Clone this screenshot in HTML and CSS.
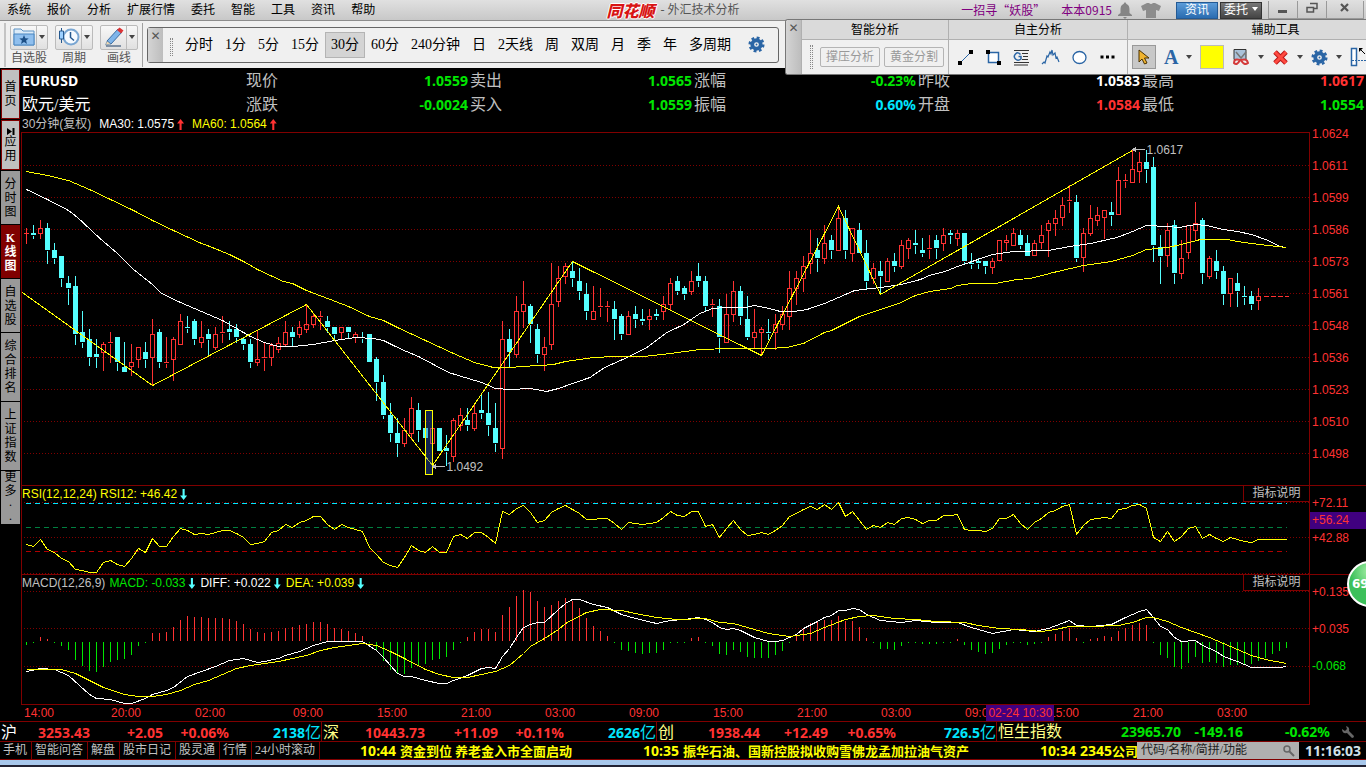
FILE: index.html
```
<!DOCTYPE html>
<html lang="zh-CN">
<head>
    <meta charset="UTF-8">
    <title>同花顺 - 外汇技术分析</title>
    <link rel="stylesheet" href="styles.css">
</head>
<body>
    <svg class="defs" width="0" height="0">
        <symbol id="gear" viewBox="0 0 18 18">
            <circle cx="9" cy="9" r="4.500" fill="none" stroke="#2a65a5" stroke-width="4"/>
            <circle cx="9" cy="9" r="7.200" fill="none" stroke="#2a65a5" stroke-width="2.600" stroke-dasharray="3 2.650"/>
            <circle cx="9" cy="9" r="1" fill="#2a65a5"/>
        </symbol>
    </svg>

    <header class="titlebar">
        <nav class="menu">
            <a href="#">系统</a><a href="#">报价</a><a href="#">分析</a><a href="#">扩展行情</a><a href="#">委托</a><a href="#">智能</a><a href="#">工具</a><a href="#">资讯</a><a href="#">帮助</a>
        </nav>
        <div class="app-name"><span class="logo">同花顺</span><span>- 外汇技术分析</span></div>
        <div class="title-right">
            <a class="promo" href="#">一招寻“妖股”</a>
            <a class="promo user" href="#">本本0915</a>
            <svg width="14" height="17" viewBox="0 0 14 17"><path d="M7 0l1.500 2C11 3 11.500 5 11.500 8v3l2.500 2v1H0v-1l2.500-2V8c0-3 .5-5 3-6zM5 15h4l-2 2z" fill="#858585"/></svg>
            <svg class="shirt" width="20" height="15" viewBox="0 0 20 15"><path d="M6 0h2q2 2 4 0h2l6 3-2 5-3-1v8H5V7L2 8 0 3z" fill="#8c8c8c"/></svg>
            <button class="tb-btn blue">资讯</button>
            <button class="tb-btn dark">委托<i class="caret"></i></button>
            <div class="win-btns">
                <button aria-label="最小化"><svg width="12" height="12"><path d="M1 8h9v3H1z" fill="#555"/></svg></button>
                <button aria-label="还原"><svg width="12" height="12"><path d="M4 1.500h7v5H8M1 5.500h6.500V10H1z" fill="none" stroke="#555" stroke-width="1.500"/></svg></button>
                <button class="close" aria-label="关闭"><svg width="12" height="12"><path d="M2 2l7 7M9 2L2 9" stroke="#555" stroke-width="2.200"/></svg></button>
            </div>
        </div>
    </header>

    <div class="toolbar">
        <div class="quick">
            <div class="quick-item">
                <div class="split"><button aria-label="自选股"><svg width="22" height="20" viewBox="0 0 22 20"><path d="M1 18V2h7l2 2h11v14z" fill="#dcebf8" stroke="#5b92c4"/><path d="M1 7h20v11H1z" fill="#8fbfee" stroke="#4a86c0"/><path d="M11 8l1.300 3.200 3.400.2-2.600 2.200.9 3.400-3-1.900L8 17l.9-3.400-2.600-2.200 3.400-.2z" fill="#1c4f86"/></svg></button><button aria-label="更多自选"><i class="caret"></i></button></div>
                <span>自选股</span>
            </div>
            <div class="quick-item">
                <div class="split"><button aria-label="周期"><svg width="22" height="20" viewBox="0 0 22 20"><circle cx="13" cy="10" r="7.500" fill="#f5faff" stroke="#79a6d2" stroke-width="2"/><path d="M12.500 5v5.500l3.500 3" fill="none" stroke="#24588f" stroke-width="1.500"/><path d="M3.500 1v15" stroke="#24588f"/><path d="M1.500 4h4v8h-4z" fill="#9cd0ff" stroke="#24588f"/></svg></button><button aria-label="更多周期"><i class="caret"></i></button></div>
                <span>周期</span>
            </div>
            <div class="quick-item">
                <div class="split"><button aria-label="画线"><svg width="22" height="20" viewBox="0 0 22 20"><path d="M4 14L15 2l4 3L8 17z" fill="#7fb5ea" stroke="#3a6ea5"/><path d="M14 3l2.500-2.500 4 3L18 6.500z" fill="#d33"/><path d="M2.500 18L4 14l4 3z" fill="#f0d8b0" stroke="#3a6ea5" stroke-width=".5"/><path d="M3 19h15" stroke="#1c3f66"/></svg></button><button aria-label="更多画线"><i class="caret"></i></button></div>
                <span>画线</span>
            </div>
        </div>
        <div class="periods">
            <button class="strip" aria-label="关闭">✕</button>
            <i class="grip"></i>
            <div class="period-list">
                <button>分时</button><button>1分</button><button>5分</button><button>15分</button><button class="on">30分</button><button>60分</button><button>240分钟</button><button>日</button><button>2天线</button><button>周</button><button>双周</button><button>月</button><button>季</button><button>年</button><button>多周期</button>
            </div>
            <button class="gear-btn" aria-label="设置"><svg width="17" height="17"><use href="#gear"/></svg></button>
        </div>
    </div>

    <div class="draw-panel">
        <button class="strip" aria-label="关闭">✕</button>
        <section class="smart">
            <h2>智能分析</h2>
            <div class="tools"><i class="grip"></i><button class="outline" disabled>撑压分析</button><button class="outline" disabled>黄金分割</button></div>
        </section>
        <section class="self">
            <h2>自主分析</h2>
            <div class="tools">
                <button aria-label="直线"><svg width="17" height="17" viewBox="0 0 17 17"><path d="M3 14L14 3" stroke="#2a65a5"/><path d="M1 12h4v4H1zM12 1h4v4h-4z"/></svg></button>
                <button aria-label="矩形"><svg width="17" height="17" viewBox="0 0 17 17"><path d="M3.500 3.500h10v10h-10z" fill="#fff" stroke="#2a65a5" stroke-width="1.500"/><path d="M1 1h4v4H1zM12 12h4v4h-4z"/></svg></button>
                <button aria-label="黄金线"><svg width="17" height="17" viewBox="0 0 17 17"><path d="M1 1.500h15M9 4.500h6M10 7.500h5M9 10.500h6M1 13.500h15M1 16h14" stroke="#333"/><path d="M7.500 5.500Q5 2.500 2.500 5t0 5 5.500 0V7.500H5.500" fill="none" stroke="#2a65a5" stroke-width="1.500"/></svg></button>
                <button aria-label="波浪"><svg width="19" height="17" viewBox="0 0 19 17"><path d="M1 15l2-2 1 1 2-7 1 1 2-5 1 2 1-4 1 5 2-2 1 5 1-1 2 5" fill="none" stroke="#2a65a5" stroke-width="1.200"/></svg></button>
                <button aria-label="圆"><svg width="17" height="17" viewBox="0 0 17 17"><ellipse cx="8.500" cy="8.500" rx="6.500" ry="6" fill="#fff" stroke="#2a65a5" stroke-width="1.300"/></svg></button>
                <button aria-label="更多"><svg width="17" height="17" viewBox="0 0 17 17"><path d="M1.500 6.500h3v3h-3zM7 6.500h3v3H7zM12.500 6.500h3v3h-3z"/></svg></button>
            </div>
        </section>
        <section class="aid">
            <h2>辅助工具</h2>
            <div class="tools">
                <button class="pressed" aria-label="选择"><svg width="12" height="16" viewBox="0 0 12 16"><path d="M1 1v12l3-3 2.500 5 2.500-1-2.500-5H11z" fill="#f0b430" stroke="#4a3000"/></svg></button>
                <button class="letter">A<i class="caret"></i></button>
                <button class="swatch" aria-label="颜色"></button>
                <button aria-label="剪切"><svg width="18" height="18" viewBox="0 0 18 18"><path d="M2 1.500h12v10H2z" fill="#a9c2da" stroke="#333"/><path d="M4 4l5 6 5-6" fill="none" stroke="#777" stroke-width="1.500"/><path d="M8 12q-6-2-6 3 3 3 6-3zM9 12q6-2 7 3-4 3-7-3z" fill="none" stroke="#d43a3a" stroke-width="2"/></svg><i class="caret"></i></button>
                <button aria-label="删除"><svg width="17" height="17" viewBox="0 0 17 17"><path d="M3 3l11 11M14 3L3 14" stroke="#b81818" stroke-width="5"/><path d="M3 3l11 11M14 3L3 14" stroke="#ff4a40" stroke-width="3"/></svg><i class="caret"></i></button>
                <button aria-label="设置"><svg width="17" height="17"><use href="#gear"/></svg><i class="caret"></i></button>
                <button aria-label="区间"><svg width="17" height="20" viewBox="0 0 17 20"><path d="M1.500 1.500h5v17h-5z" fill="#fff" stroke="#2a65a5" stroke-width="1.500"/><path d="M2 13.500h15" stroke="#2a65a5" stroke-dasharray="2 1"/><path d="M9 1h4L9 5z"/><path d="M9 1l6 6" stroke="#000"/></svg></button>
            </div>
        </section>
    </div>

    <main class="workspace">
        <nav class="side">
            <a class="light" href="#">首<br>页</a>
            <a class="light" href="#"><svg width="9" height="7"><path d="M1 0l5 3.500L1 7zM6.500 0h2v7h-2z"/></svg>应<br>用</a>
            <a href="#">分<br>时<br>图</a>
            <a class="on" href="#">K<br>线<br>图</a>
            <a href="#">自<br>选<br>股</a>
            <a class="tall" href="#">综<br>合<br>排<br>名</a>
            <a class="tall" href="#">上<br>证<br>指<br>数</a>
            <a class="more" href="#">更<br>多<br>·<br>·</a>
        </nav>
        <div class="board">
            <div class="quotes">
                <strong class="name">EURUSD</strong>
                <div><span>现价</span><b class="green">1.0559</b></div>
                <div><span>卖出</span><b class="green">1.0565</b></div>
                <div><span>涨幅</span><b class="green">-0.23%</b></div>
                <div><span>昨收</span><b>1.0583</b></div>
                <div><span>最高</span><b class="red">1.0617</b></div>
                <span class="name">欧元/美元</span>
                <div><span>涨跌</span><b class="green">-0.0024</b></div>
                <div><span>买入</span><b class="green">1.0559</b></div>
                <div><span>振幅</span><b class="cyan">0.60%</b></div>
                <div><span>开盘</span><b class="red">1.0584</b></div>
                <div><span>最低</span><b class="green">1.0554</b></div>
            </div>
            <div class="legend">
                <span class="grey">30分钟(复权)</span>
                <span>MA30: 1.0575<i class="arrow up"></i></span>
                <span class="yellow">MA60: 1.0564<i class="arrow up"></i></span>
            </div>
            <div class="panel kline">
                <div class="plot"><svg id="kline"></svg></div>
                <div class="axis">
                    <span>1.0624</span><span>1.0611</span><span>1.0599</span><span>1.0586</span><span>1.0573</span><span>1.0561</span><span>1.0548</span><span>1.0536</span><span>1.0523</span><span>1.0510</span><span>1.0498</span>
                </div>
            </div>
            <div class="panel rsi">
                <div class="plot">
                    <svg id="rsi"></svg>
                    <div class="panel-head">
                        <div class="legend"><span class="yellow">RSI(12,12,24) RSI12: +46.42<i class="arrow"></i></span></div>
                        <button>指标说明</button>
                    </div>
                </div>
                <div class="axis"><span>+72.11</span><span class="cursor">+56.24</span><span>+42.88</span></div>
            </div>
            <div class="panel macd">
                <div class="plot">
                    <svg id="macd"></svg>
                    <div class="panel-head">
                        <div class="legend"><span class="grey">MACD(12,26,9)</span><span class="green">MACD: -0.033<i class="arrow"></i></span><span>DIFF: +0.022<i class="arrow"></i></span><span class="yellow">DEA: +0.039<i class="arrow"></i></span></div>
                        <button>指标说明</button>
                    </div>
                </div>
                <div class="axis"><span>+0.135</span><span>+0.035</span><span class="green">-0.068</span></div>
            </div>
            <div class="times">
                <span class="first">14:00</span><span>20:00</span><span class="wide">02:00</span><span>09:00</span><span>15:00</span><span>21:00</span><span>03:00</span><span>09:00</span><span>15:00</span><span>21:00</span><span>03:00</span><span>09:00</span><span>15:00</span><span>21:00</span><span>03:00</span>
                <em>02-24 10:30</em>
            </div>
        </div>
    </main>

    <div class="indices">
        <div class="index sh"><div><span class="white">沪</span><b>3253.43</b></div><b>+2.05</b><b>+0.06%</b><b class="cyan">2138<span>亿</span></b></div>
        <div class="index sz"><div><span>深</span><b>10443.73</b></div><b>+11.09</b><b>+0.11%</b><b class="cyan">2626<span>亿</span></b></div>
        <div class="index cy"><div><span>创</span><b>1938.44</b></div><b>+12.49</b><b>+0.65%</b><b class="cyan">726.5<span>亿</span></b></div>
        <div class="index hk green"><div><span>恒生指数</span><b>23965.70</b></div><b>-149.16</b><b>-0.62%</b><svg width="14" height="14" viewBox="0 0 14 14"><path d="M5 1q4 1 3 5l5 5q0 2-2 2L6 8Q1 9 1 4l3 2 2-2z" fill="#666"/></svg></div>
    </div>

    <footer class="status">
        <nav><a href="#">手机</a><a href="#">智能问答</a><a href="#">解盘</a><a href="#">股市日记</a><a href="#">股灵通</a><a href="#">行情</a><a href="#">24小时滚动</a></nav>
        <div class="news">
            <a href="#"><time>10:44</time>资金到位 养老金入市全面启动</a>
            <a href="#"><time>10:35</time>振华石油、国新控股拟收购雪佛龙孟加拉油气资产</a>
            <a href="#"><time>10:34</time><time>2345</time>公司</a>
        </div>
        <label class="search"><input type="text" placeholder="代码/名称/简拼/功能" aria-label="搜索"><svg width="12" height="12" viewBox="0 0 12 12"><circle cx="4" cy="4" r="3" fill="none" stroke="#666" stroke-width="1.500"/><path d="M6 6l5 5" stroke="#666" stroke-width="2"/></svg></label>
        <time class="clock">11:16:03</time>
    </footer>
    <div class="desktop"></div>
    <div class="ball">69</div>

    <script src="chart.js"></script>
</body>
</html>
```
FILE: styles.css
```
* {
    box-sizing: border-box;
}

html {
    overflow-x: hidden;
}

body {
    margin: 0;
    min-height: 100vh;
    display: flex;
    flex-direction: column;
    position: relative;
    overflow-x: hidden;
    background: #000;
    color: #fff;
    font: 12px/16px "Liberation Serif", "Noto Sans CJK SC", serif;
}

a {
    color: inherit;
    text-decoration: none;
}

button {
    margin: 0;
    padding: 0;
    border: 0;
    background: none;
    color: inherit;
    font: inherit;
    white-space: nowrap;
}

svg {
    flex: none;
}

.defs {
    position: absolute;
}

.green { color: #00e600; }
.red { color: #ff3232; }
.cyan { color: #00e6ff; }
.yellow { color: #ff0; }
.grey { color: #c0c0c0; }

.caret {
    display: inline-block;
    border: 3px solid transparent;
    border-top: 4px solid #444;
    border-bottom: 0;
}

/* title bar */
.titlebar {
    display: grid;
    grid-template-columns: 1fr auto 1fr;
    height: 21px;
    border-bottom: 1px solid #8c8c8c;
    background: linear-gradient(#e0e0e0, #c8c8c8);
    color: #000;
    white-space: nowrap;
}

.menu {
    display: flex;
    align-items: center;
    gap: 16px;
    padding-left: 7px;
}

.app-name {
    display: flex;
    align-items: center;
    gap: 6px;
    padding-right: 20px;
    color: #555;
}

.logo {
    color: #d81414;
    font: italic 900 16px/20px "Noto Sans CJK SC", sans-serif;
    text-shadow: 1px 0 #fff, -1px 0 #fff, 0 1px #fff, 0 -1px #fff;
}

.title-right {
    display: flex;
    align-items: center;
    justify-content: flex-end;
    padding-right: 2px;
}

.promo {
    margin-right: 16px;
    color: #800080;
    font-family: "Noto Sans CJK SC", sans-serif;
}

.promo.user {
    margin-right: 6px;
}

.shirt {
    margin: 0 15px 0 9px;
}

.tb-btn {
    width: 42px;
    height: 17px;
    margin-right: 2px;
    border: 1px solid #333;
    color: #fff;
    line-height: 14px;
}

.tb-btn.blue {
    background: linear-gradient(#5b9bd8, #2a6cb0);
    border-color: #245a94;
}

.tb-btn.dark {
    background: linear-gradient(#777, #444);
}

.tb-btn .caret {
    margin: 0 0 3px 4px;
    border-top-color: #fff;
}

.win-btns {
    display: flex;
    height: 18px;
    margin-left: 4px;
    border: 1px solid #999;
    border-top: 0;
}

.win-btns button {
    width: 29px;
    border-right: 1px solid #999;
}

.win-btns .close {
    width: 36px;
    border: 0;
}

/* toolbar */
.toolbar {
    display: flex;
    align-items: center;
    height: 47px;
    background: #f0f0f0;
    color: #000;
}

.quick {
    display: flex;
    gap: 7px;
    height: 44px;
    margin-left: 4px;
    padding: 2px 4px 0;
    border-left: 2px solid #c4c4c4;
    border-right: 1px solid #a0a0a0;
    color: #555;
}

.quick-item {
    display: flex;
    flex-direction: column;
    align-items: center;
}

.split {
    display: flex;
    height: 25px;
    border: 1px solid #bbb;
    border-radius: 2px;
    background: linear-gradient(#f8f8f8, #e0e0e0);
}

.split button {
    display: flex;
    align-items: center;
    justify-content: center;
    width: 25px;
}

.split button + button {
    width: 11px;
    border-left: 1px solid #bbb;
}

.periods {
    display: flex;
    align-items: center;
    height: 36px;
    width: 632px;
    margin-left: 4px;
    border: 1px solid #666;
    border-radius: 3px;
    font-size: 14px;
}

.strip {
    display: flex;
    flex: none;
    justify-content: center;
    align-self: stretch;
    width: 15px;
    background: linear-gradient(90deg, #d4d4d4, #bdbdbd);
    color: #555;
    font: bold 12px/16px "DejaVu Sans", sans-serif;
}

.grip {
    flex: none;
    width: 3px;
    height: 18px;
    margin: 4px 6px 0 7px;
    border: 1px dotted #888;
    border-width: 0 1px;
}

.period-list {
    display: flex;
}

.period-list button {
    height: 26px;
    padding: 0 6px;
}

.period-list .on {
    padding: 0 5px;
    border: 1px solid #b4b4b4;
    background: #d4d4d4;
}

.gear-btn {
    margin: 4px 0 0 11px;
}

/* drawing tools float over the toolbar and quotes */
.draw-panel {
    position: absolute;
    top: 19px;
    right: 0;
    display: flex;
    width: 581px;
    height: 56px;
    overflow: hidden;
    border: 1px solid #777;
    border-right: 0;
    border-radius: 3px 0 0 3px;
    background: #f0f0f0;
    color: #000;
}

.draw-panel section {
    flex: none;
    border-left: 1px solid #b0b0b0;
}

.draw-panel h2 {
    margin: 0;
    height: 20px;
    border-bottom: 1px solid #b0b0b0;
    background: #dadada;
    font: inherit;
    line-height: 20px;
    text-align: center;
}

.smart { width: 147px; }
.self { width: 179px; }
.aid { width: 296px; }

.tools {
    display: flex;
    align-items: center;
    height: 34px;
}

.tools button {
    display: flex;
    align-items: center;
}

.smart .tools {
    gap: 4px;
}

.smart .grip {
    height: 24px;
    margin: 0 3px 0 8px;
}

.tools .outline {
    height: 20px;
    padding: 0 5px;
    border: 1px solid #b4b4b4;
    border-radius: 2px;
    color: #999;
}

.self .tools {
    gap: 11px;
    padding-left: 8px;
}

.aid .tools {
    gap: 8px;
    padding-left: 4px;
}

.aid .caret {
    margin-left: 8px;
}

.tools .pressed {
    width: 24px;
    height: 24px;
    justify-content: center;
    border: 1px solid #999;
    background: #c8c8c8;
}

.tools .letter {
    color: #2a65a5;
    font: bold 20px/24px "Liberation Serif", serif;
}

.tools .swatch {
    width: 24px;
    height: 24px;
    border: 1px solid #bbb;
    background: #ff0;
}

/* workspace */
.workspace {
    display: flex;
    flex: 1;
}

.side {
    display: flex;
    flex-direction: column;
    gap: 1px;
    width: 21px;
    padding: 1px 1px 0;
    color: #000;
    line-height: 14px;
    text-align: center;
}

.side a {
    display: grid;
    align-content: center;
    justify-items: center;
    height: 53px;
    background: #999;
}

.side .light {
    height: 50px;
    border: 1px solid #800000;
    background: #c0c0c0;
}

.side .on {
    background: #800000;
    color: #fff;
    font-weight: bold;
}

.side .tall {
    height: 68px;
}

.board {
    flex: 1;
    min-width: 0;
}

.quotes {
    display: grid;
    grid-template-columns: repeat(6, 1fr);
    padding: 1px 0 0 1px;
    font-size: 16px;
    line-height: 24px;
    white-space: nowrap;
}

.quotes > div {
    display: flex;
    justify-content: space-between;
    padding-right: 2px;
    color: #c0c0c0;
}

.quotes > * {
    height: 24px;
}

.quotes b,
.quotes strong,
.indices b {
    font: bold 14px/24px "Noto Sans", sans-serif;
}

.quotes b {
    color: #fff;
}

.quotes b.green { color: #00e600; }
.quotes b.red { color: #ff3232; }
.quotes b.cyan { color: #00e6ff; }

.legend {
    display: flex;
    gap: 8px;
    height: 15px;
    padding-left: 1px;
    font: 12px/15px "Liberation Sans", "Noto Sans CJK SC", sans-serif;
    white-space: nowrap;
}

.arrow {
    display: inline-block;
    width: 7px;
    height: 11px;
    margin: 0 1px 0 3px;
    background: #5ff;
    vertical-align: -2px;
    clip-path: polygon(35% 0, 65% 0, 65% 60%, 100% 60%, 50% 100%, 0 60%, 35% 60%);
}

.arrow.up {
    margin-right: 0;
    background: #ff3232;
    clip-path: polygon(35% 100%, 65% 100%, 65% 40%, 100% 40%, 50% 0, 0 40%, 35% 40%);
}

.panel {
    display: grid;
    grid-template-columns: 1fr 56px;
    grid-template-rows: minmax(0, 1fr);
    border-top: 1px solid #800000;
}

.plot {
    display: grid;
    grid-template-rows: minmax(0, 1fr);
    min-width: 0;
    border-left: 1px solid #800000;
    border-right: 1px solid #800000;
}

.plot > * {
    grid-area: 1 / 1;
}

.plot svg {
    width: 100%;
    height: 100%;
    shape-rendering: crispEdges;
}

.kline {
    height: 353px;
    border-top: 0;
}

.kline .plot {
    border-top: 1px solid #800000;
}

.rsi {
    height: 89px;
}

.macd {
    height: 131px;
}

.macd .plot {
    border-bottom: 1px solid #800000;
}

.panel-head {
    display: flex;
    justify-content: space-between;
    align-self: start;
}

.panel-head .legend {
    gap: 4px;
    padding: 0;
    line-height: 16px;
}

.panel-head button {
    width: 66px;
    height: 16px;
    border: 1px solid #800000;
    border-width: 0 0 1px 1px;
    color: #c0c0c0;
    line-height: 15px;
}

.axis {
    display: flex;
    flex-direction: column;
    color: #ff3232;
    font: 12px/16px "Liberation Sans", sans-serif;
}

.axis span {
    padding-left: 2px;
}

.axis .green {
    color: #00e600;
}

.kline .axis {
    margin-top: -14px;
    line-height: 32px;
}

.rsi .axis {
    gap: 1px;
    padding-top: 9px;
}

.rsi .cursor {
    background: #400080;
    line-height: 17px;
}

.macd .axis {
    gap: 21px;
    padding-top: 9px;
}

.times {
    display: flex;
    position: relative;
    height: 16px;
    padding-left: 3px;
    color: #ff3232;
    font: 12px/16px "Liberation Sans", sans-serif;
}

.times span {
    width: 84px;
}

.times .first { width: 87px; }
.times .wide { width: 98px; }

/* time under the crosshair */
.times em {
    position: absolute;
    left: 72%;
    top: 0;
    margin-left: -3px;
    padding: 0 2px;
    background: #400080;
    font-style: normal;
    white-space: nowrap;
}

/* index row */
.indices {
    display: grid;
    grid-template-columns: 322fr 335fr 340fr 369fr;
    height: 20px;
    border-top: 1px solid #800000;
    color: #ff3232;
    white-space: nowrap;
}

.index {
    display: grid;
    grid-template-columns: 1fr 73px 66px 92px;
    align-items: center;
    height: 19px;
    padding-left: 1px;
    border-right: 1px solid #800000;
    text-align: right;
}

.index.cy {
    grid-template-columns: 1fr 68px 68px 100px;
}

.index.hk {
    grid-template-columns: 1fr 62px 87px 36px;
    border: 0;
}

.hk svg {
    justify-self: center;
}

.index > div {
    display: flex;
    justify-content: space-between;
}

.index b,
.index div {
    line-height: 19px;
}

.index div span {
    color: #ff8;
    font-size: 16px;
}

.index div .white {
    color: #fff;
}

.index b span {
    font: 16px/19px "Noto Sans CJK SC", sans-serif;
}

/* status bar */
.status {
    display: flex;
    height: 19px;
    border-top: 1px solid #800000;
    border-bottom: 1px solid #800000;
    line-height: 17px;
    white-space: nowrap;
}

.status nav {
    display: flex;
    color: #c0c0c0;
}

.status nav a {
    padding: 0 4px 0 3px;
    border-right: 1px solid #800000;
}

.news {
    display: flex;
    flex: 1;
    gap: 71px;
    min-width: 0;
    padding-left: 40px;
    overflow: hidden;
    color: #ff0;
    font: bold 13px/17px "Noto Sans CJK SC", sans-serif;
}

.news time {
    margin-right: 4px;
    font: bold 14px/17px "Noto Sans", sans-serif;
}

.news time + time {
    margin-right: 0;
}

.search {
    display: flex;
    align-items: center;
    width: 162px;
    padding: 0 4px;
    background: #b0b0b0;
}

.search input {
    flex: 1;
    min-width: 0;
    height: 16px;
    padding: 0;
    border: 0;
    background: none;
    font: inherit;
}

.search input::placeholder {
    color: #222;
}

.clock {
    width: 67px;
    padding-left: 6px;
    color: #d0e0e8;
    font: bold 14px/17px "Noto Sans", sans-serif;
}

.desktop {
    height: 7px;
    border-bottom: 2px solid #223;
    background: #a8c8ec;
}

.ball {
    position: absolute;
    top: 561px;
    right: -27px;
    width: 46px;
    height: 46px;
    padding-left: 3px;
    border: 2px solid #fff;
    border-radius: 50%;
    background: radial-gradient(circle at 50% 20%, #a8f0a8, #3cc05a 50%);
    font: bold 12px/42px "DejaVu Sans", sans-serif;
}

/* chart strokes */
.grid { stroke: #800000; stroke-dasharray: 1 2; }
.candle-up { stroke: #ff3232; fill: none; }
.candle-down { stroke: #5ff; fill: #5ff; }
.line { fill: none; stroke: #ff0; }
.line.white { stroke: #fff; }
.bar-up { stroke: #ff3232; }
.bar-down { stroke: #00e600; }
.level-high { stroke: #00e6ff; stroke-dasharray: 5 4; }
.level-mid { stroke: #008040; stroke-dasharray: 5 4; }
.level-low { stroke: #b00000; stroke-dasharray: 5 4; }
.last { stroke: #ff3232; stroke-dasharray: 5 2; }
.select-box { fill: #2a5ac0; fill-opacity: 0.4; stroke: #ff0; }
.mark { stroke: #c0c0c0; fill: #c0c0c0; }
.mark-text { fill: #c0c0c0; font: 12px "Liberation Sans", sans-serif; }
```
FILE: chart.js
```
const NS = 'http://www.w3.org/2000/svg';
const STEP = 7;

// type, high, body top, body bottom, low
const candles = `u96,101,101,111 d93,101,103,106 u88,96,101,106 d91,96,118,131 d111,118,126,131 d124,124,146,154 d144,151,156,172 d144,154,202,212
d179,200,210,215 d197,207,225,233 d207,222,225,235 u210,212,220,238 u200,210,211,230 d205,205,230,238 d210,235,240,240 u212,230,234,243
u215,215,227,235 d210,220,227,235 u187,202,225,253 d197,200,230,235 u205,230,231,235 u205,207,227,248 u182,189,212,212 d184,195,196,200
d187,189,207,212 u189,205,210,215 d197,202,207,222 u195,202,215,217 u184,200,201,210 d189,197,200,207 d192,197,205,210 d205,207,212,217
d207,212,230,235 u199,227,230,233 u210,225,226,238 u211,213,225,233 u205,211,217,220 u189,200,212,214 d195,200,205,214 u189,195,202,205
u173,192,197,200 u181,184,192,195 u179,184,185,197 d184,189,195,200 d195,195,202,207 u195,195,200,206 d195,195,200,206 u200,202,205,210
d200,205,206,210 d202,202,230,230 d225,227,250,268 d243,250,283,286 d271,283,301,309 d286,301,311,324 u286,298,311,314 u265,276,301,307
d271,278,298,309 d296,296,306,306 u296,296,311,311 d296,296,319,319 d303,316,319,333 u286,288,324,329 u276,283,293,298 d276,288,293,298
u271,281,296,298 d262,278,281,286 d260,281,293,303 d271,296,311,319 u189,207,316,326 d197,207,220,235 u164,179,222,225 u149,172,179,195
d172,174,192,210 d192,197,222,230 u205,215,222,238 u131,172,212,217 u134,146,169,174 u131,134,144,151 d129,139,146,154 d136,149,159,167
d151,162,179,187 u154,179,187,187 u156,174,175,184 u169,174,175,189 d169,177,187,207 d182,184,202,207 u179,184,202,202 d174,182,187,195
d177,187,189,192 u177,184,187,197 d177,182,184,187 u164,172,179,187 u146,151,172,177 d144,149,159,162 d154,156,162,167 u139,149,159,162
d131,144,149,154 d144,149,174,179 u167,172,173,184 d167,174,205,220 u162,182,210,210 u149,159,182,189 d154,159,184,192 d164,187,205,207
u177,200,205,216 u195,197,200,223 d187,200,201,207 u182,192,200,217 u174,182,192,197 u139,156,184,197 u139,146,156,172 u124,134,146,159
u98,121,131,141 d106,118,126,139 u93,111,126,131 d103,108,118,126 u73,86,118,118 d78,86,118,126 u96,96,121,129 d91,98,121,121
d108,121,149,156 u131,136,146,151 d129,139,144,162 u126,129,149,149 d121,129,134,139 u108,113,134,136 u106,108,116,126 d98,111,113,121
d106,118,121,124 u103,116,117,126 d103,108,116,126 u96,103,111,118 d98,101,103,111 u98,101,106,113 d101,101,129,131 d121,131,132,136
d126,129,131,136 d129,129,134,141 u126,129,135,141 u108,108,128,128 u103,108,110,118 u96,101,113,113 d98,103,113,116 d103,111,124,124
u108,111,123,123 u93,103,110,116 u88,91,98,124 u78,86,91,103 u65,73,85,93 u53,68,69,80 d63,70,126,129 u96,101,125,139
u73,86,101,103 u75,83,88,93 u78,78,85,106 d70,80,83,93 u35,48,82,82 u42,48,49,55 u18,37,50,50 u20,30,39,50
d18,30,37,50 d25,35,113,129 d103,115,124,151 u91,98,123,134 d88,93,141,151 u108,126,141,146 u93,93,120,126 u70,91,98,108
d86,88,141,151 u124,126,144,146 d118,129,139,146 d134,139,162,172 u146,146,161,174 d141,151,159,174 d154,164,165,172 d159,164,172,177
u156,164,168,177`.split(/\s+/);

// the lines below are "bar:y" pairs
const ma30 = '0:57 3:67 6:78 7.3:85 10.5:106 13:121 15.3:137 18:152 19.3:161 22:170 25:179 28:188 30:196 32:204 34:210 36:214 38:214 41:212 44:208 47:205 49.6:206 51:208 53.6:217 56:224 60.3:240 65:250 67:256 69:257 72:256 74.3:259 76:256 78:251 80.5:245 82.6:235 85.8:225 88.6:215 91.5:200 93.9:192 96.2:181 98:176 100:175 102.7:175 104:173 105.5:175 107.7:179 109.6:179 111.5:177 114:171 116:165 118.3:158 122:155 125:152 127.7:147 129:143 131.2:139 133.4:133 135.5:128 138:122 141:119 146:118 149:114 152:111 155.8:105 158:99 160:93 163:94 164.7:95 167:92 168.6:93 171:97 173:99 175:102 177.4:108 179:114 180:115';
const ma60 = '0:39 3:43 6:48 9:57 12:67 15.3:78 18:88 21:98 25:111 26.2:114 29:122 31:129 33:137 36.7:149 38:151 40:158 43.4:167 46:174 49:184 51:188 53:195 57:208 61:221 64:230 66.7:235 69.3:235 70.5:234 73.4:233 75.3:232 77:229 81:225 84:224 88.2:224 92:221 96.2:217 100.5:216 105.8:216 108.6:215 111:211 114:200 115:198 119:184 122:177 124.6:171 127:163 129:159 132:156 133:153 135:151 138.4:151 141.5:147 143.4:146 146.7:140 151:133 155:129 158:123 160:117 163:115 165:112 167.7:107 171.5:107 173.9:110 177.4:113 180:115';
const zigzag = '-0.6:160 18:253 40:172 58:333 78:129 105:223 116:74 122:162 158:18';
const diff = '0:97 2:94 4:95 6:101 9:120 10:124 12:125 14:129 15:129 17:124 18:120 20:116 21:113 23:102 25:97 27:92 29:86 31:84 33:88 34:87 36:84 37:81 39:77 41:71 43:67 48:67 50:76 51:83 52:91 53:99 54:102 55:102 57:106 59:109 60:109 61:106 63:101 65:94 66:93 67:94 68:82 69:74 70:63 71:53 72:50 73:48 74:48 76:35 77:29 78:25 79:25 81:30 83:33 85:40 87:44 90:49 92:46 94:45 96:43 97:45 98:48 99:53 100:55 101:54 102:56 104:63 106:67 107:67 108:66 110:60 111:54 113:47 114:43 115:41 116:36 117:36 118:34 119:35 120:40 122:46 125:48 127:46 130:48 133:48 135:53 138:59 141:55 144:57 146:54 149:46 150:51 152:52 155:50 157:43 159:37 160:35 161:43 162:52 163:55 164:63 165:67 167:66 168:71 170:77 171:82 173:87 175:93 176:93 179:93 180:92';
const dea = '0:95 5:95 7:99 9:106 11:113 14:120 16:122 18:122 20:120 22:116 24:110 26:106 28:100 30:94 32:91 34:89 36:87 38:84 40:81 42:76 44:73 46:71 48:69 50:71 52:77 54:84 57:95 59:100 61:103 63:103 65:100 67:97 69:91 71:79 72:72 74:64 76:55 77:49 80:38 82:35 85:36 87:39 90:43 93:45 97:44 99:48 101:49 103:53 106:59 109:62 112:59 114:53 117:45 119:42 121:41 124:44 127:45 130:47 134:48 136:51 139:54 142:55 145:57 147:55 149:52 152:52 156:51 158:48 160:43 161:43 163:47 165:53 167:58 169:63 171:69 173:75 175:81 177:85 180:89';

const rsi = [59,61,54,64,67,73,76,84,85,87,87,77,75,79,81,73,63,67,53,61,61,51,43,45,49,48,49,47,45,45,48,52,59,58,56,47,45,39,42,37,35,31,31,39,44,39,42,44,46,62,69,77,80,82,72,60,65,67,61,67,67,51,49,53,47,47,52,58,26,29,23,20,27,37,35,27,23,20,24,28,34,34,33,33,38,44,37,38,39,38,37,32,26,30,31,26,26,41,39,52,43,35,44,50,49,47,49,45,40,31,28,24,21,24,19,24,17,31,26,35,44,40,42,37,39,33,32,34,38,35,35,30,30,29,44,45,45,46,43,33,33,29,38,44,37,33,27,25,21,19,49,40,34,33,32,33,24,23,20,19,23,52,56,46,56,51,43,41,53,49,53,56,52,54,56,57,54,54,54,54,54];
const bars = [-3,-1,4,2,-1,-4,-8,-18,-24,-29,-30,-25,-20,-18,-17,-13,-4,-1,8,8,9,14,21,25,24,24,23,23,23,22,20,17,12,9,8,9,10,13,14,16,17,19,19,17,13,12,10,8,5,-1,-8,-19,-28,-32,-32,-26,-23,-22,-18,-17,-15,-8,-1,4,9,12,12,9,26,34,45,51,49,40,34,36,40,43,40,33,23,15,10,5,-1,-8,-9,-11,-12,-11,-11,-8,-1,-1,-1,3,4,-1,-4,-12,-13,-8,-10,-15,-16,-16,-16,-13,-9,-1,5,12,18,19,21,21,25,20,20,14,3,-1,-7,-7,-8,-4,-1,-1,-2,-2,-2,-1,-1,2,-3,-8,-10,-12,-11,-7,-3,-1,-1,-3,-2,-1,4,7,10,13,3,-1,2,3,5,4,10,13,16,18,16,-1,-13,-16,-25,-27,-21,-15,-21,-20,-21,-25,-23,-23,-22,-22,-19,-16,-12,-9,-6];

const x = i => 4.5 + i * STEP;
const y = v => v - 0.5; // the panel's top border takes the first row

function add(svg, tag, cls, attrs, text) {
    const el = document.createElementNS(NS, tag);
    el.setAttribute('class', cls);
    for (const key in attrs) el.setAttribute(key, attrs[key]);
    if (text) el.textContent = text;
    svg.appendChild(el);
}

function line(svg, cls, x1, y1, x2, y2) {
    add(svg, 'line', cls, { x1, y1, x2, y2 });
}

function curve(svg, cls, data) {
    const points = data.split(' ').map(p => {
        const [i, v] = p.split(':');
        return x(+i) + ',' + y(+v);
    }).join(' ');
    add(svg, 'polyline', cls, { points });
}

function mark(svg, px, py, text) {
    line(svg, 'mark', px, py, px + 12, py);
    add(svg, 'path', 'mark', { d: `M${px} ${py}l3 -2v4z` });
    add(svg, 'text', 'mark-text', { x: px + 14, y: py + 4 }, text);
}

function drawKline() {
    const svg = document.getElementById('kline');
    for (let v = 33; v < 340; v += 32) line(svg, 'grid', 2, y(v), '100%', y(v));

    candles.forEach((c, i) => {
        const [high, top, bottom, low] = c.slice(1).split(',').map(Number);
        const cls = c[0] === 'u' ? 'candle-up' : 'candle-down';
        if (top > high) line(svg, cls, x(i), y(high) - 0.5, x(i), y(top));
        if (low > bottom) line(svg, cls, x(i), y(bottom), x(i), y(low) + 0.5);
        if (bottom - top < 2) {
            line(svg, cls, x(i) - 2.5, y(top), x(i) + 2.5, y(top));
        } else {
            const height = c[0] === 'u' ? bottom - top : bottom - top - 1;
            add(svg, 'rect', cls, { x: x(i) - 2, y: y(top), width: 4, height });
        }
    });

    curve(svg, 'line white', ma30);
    curve(svg, 'line', ma60);
    curve(svg, 'line', zigzag);
    add(svg, 'rect', 'select-box', { x: x(57), y: y(278), width: 7, height: 64 });
    line(svg, 'last', x(176) + 5, y(164), x(180) + 2, y(164));
    mark(svg, x(58), y(334), '1.0492');
    mark(svg, x(158), y(17), '1.0617');
}

function drawRsi() {
    const svg = document.getElementById('rsi');
    [17, 52, 88].forEach(v => line(svg, 'grid', 2, y(v), '100%', y(v)));
    line(svg, 'level-high', 4, y(18), x(180), y(18));
    line(svg, 'level-mid', 4, y(42), x(180), y(42));
    line(svg, 'level-low', 4, y(66), x(180), y(66));
    curve(svg, 'line', rsi.map((v, i) => i + ':' + v).join(' '));
}

function drawMacd() {
    const svg = document.getElementById('macd');
    [17, 54, 92].forEach(v => line(svg, 'grid', 2, y(v), '100%', y(v)));
    bars.forEach((v, i) => {
        if (v > 0) line(svg, 'bar-up', x(i), 66 - v, x(i), 66);
        else line(svg, 'bar-down', x(i), 67, x(i), 67 - v);
    });
    curve(svg, 'line white', diff);
    curve(svg, 'line', dea);
}

drawKline();
drawRsi();
drawMacd();
```
